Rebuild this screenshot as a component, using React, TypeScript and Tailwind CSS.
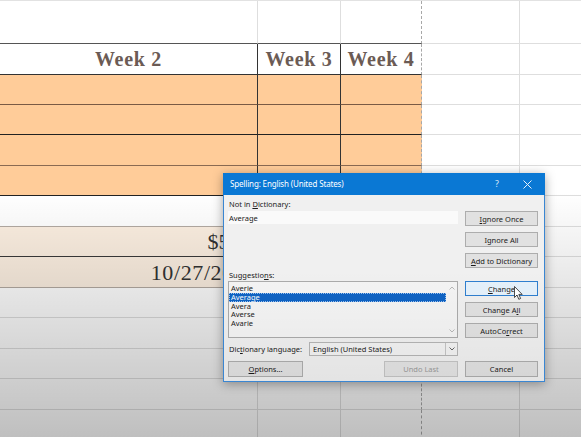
import React from "react";

const ui = { fontFamily: '"Noto Sans", "Open Sans", sans-serif' };
const serif = { fontFamily: '"Liberation Serif", "DejaVu Serif", serif' };

function U({ children }: { children: React.ReactNode }) {
  return <span className="underline underline-offset-[1px]">{children}</span>;
}

function Btn({
  children,
  variant = "normal",
  className = "",
}: {
  children: React.ReactNode;
  variant?: "normal" | "default" | "disabled";
  className?: string;
}) {
  const v =
    variant === "default"
      ? "bg-[#e5f1fb] border-[#2f7fcf] text-[#1a1a1a]"
      : variant === "disabled"
      ? "bg-[#e3e3e3] border-[#c4c4c4] text-[#9a9a9a]"
      : "bg-[#e1e1e1] border-[#adadad] text-[#1a1a1a]";
  return (
    <div
      className={`flex items-center justify-center border text-[7.5px] leading-[10px] ${v} ${className}`}
    >
      {children}
    </div>
  );
}

export default function App() {
  return (
    <div className="relative w-[581px] h-[437px] overflow-hidden bg-white">
      {/* Spreadsheet */}
      <div className="flex flex-col border-t border-t-[#e2e2e2]">
        {/* Row 0 */}
        <div className="flex h-[43px]">
          <div className="w-[258px] border-r border-b border-r-[#dedede] border-b-[#555555]" />
          <div className="w-[83px] border-r border-b border-r-[#dedede] border-b-[#555555]" />
          <div className="w-[81px] border-r border-b border-r-[#a8a8a8] [border-right-style:dashed] border-b-[#555555]" />
          <div className="w-[98px] border-r border-b border-r-[#dedede] border-b-[#dedede]" />
          <div className="flex-1 border-b border-b-[#dedede]" />
        </div>
        {/* Header row */}
        <div className="flex h-[31px] text-[20px] font-bold tracking-[0.7px] text-[#6b5b55]" style={serif}>
          <div className="w-[258px] flex items-center justify-center border-r border-b border-r-[#333333] border-b-[#333333]">
            Week 2
          </div>
          <div className="w-[83px] flex items-center justify-center border-r border-b border-r-[#333333] border-b-[#333333]">
            Week 3
          </div>
          <div className="w-[81px] flex items-center justify-center border-r border-b border-r-[#a8a8a8] [border-right-style:dashed] border-b-[#333333]">
            Week 4
          </div>
          <div className="w-[98px] border-r border-b border-r-[#dedede] border-b-[#dedede]" />
          <div className="flex-1 border-b border-b-[#dedede]" />
        </div>
        {/* Orange rows */}
        <div className="flex h-[30px]">
          <div className="w-[258px] bg-[#ffcc99] border-r border-b border-r-[#333333] border-b-[#7a5a44]" />
          <div className="w-[83px] bg-[#ffcc99] border-r border-b border-r-[#333333] border-b-[#7a5a44]" />
          <div className="w-[81px] bg-[#ffcc99] border-r border-b border-r-[#a8a8a8] [border-right-style:dashed] border-b-[#7a5a44]" />
          <div className="w-[98px] border-r border-b border-r-[#dedede] border-b-[#dedede]" />
          <div className="flex-1 border-b border-b-[#dedede]" />
        </div>
        <div className="flex h-[30px]">
          <div className="w-[258px] bg-[#ffcc99] border-r border-b border-r-[#333333] border-b-[#222222]" />
          <div className="w-[83px] bg-[#ffcc99] border-r border-b border-r-[#333333] border-b-[#222222]" />
          <div className="w-[81px] bg-[#ffcc99] border-r border-b border-r-[#a8a8a8] [border-right-style:dashed] border-b-[#222222]" />
          <div className="w-[98px] border-r border-b border-r-[#dedede] border-b-[#dedede]" />
          <div className="flex-1 border-b border-b-[#dedede]" />
        </div>
        <div className="flex h-[31px]">
          <div className="w-[258px] bg-[#ffcc99] border-r border-b border-r-[#333333] border-b-[#8a6a52]" />
          <div className="w-[83px] bg-[#ffcc99] border-r border-b border-r-[#333333] border-b-[#8a6a52]" />
          <div className="w-[81px] bg-[#ffcc99] border-r border-b border-r-[#a8a8a8] [border-right-style:dashed] border-b-[#8a6a52]" />
          <div className="w-[98px] border-r border-b border-r-[#dedede] border-b-[#dedede]" />
          <div className="flex-1 border-b border-b-[#dedede]" />
        </div>
        <div className="flex h-[30px]">
          <div className="w-[258px] bg-[#ffcc99] border-r border-b border-r-[#333333] border-b-[#222222]" />
          <div className="w-[83px] bg-[#ffcc99] border-r border-b border-r-[#333333] border-b-[#222222]" />
          <div className="w-[81px] bg-[#ffcc99] border-r border-b border-r-[#a8a8a8] [border-right-style:dashed] border-b-[#222222]" />
          <div className="w-[98px] border-r border-b border-r-[#dedede] border-b-[#dedede]" />
          <div className="flex-1 border-b border-b-[#dedede]" />
        </div>
        {/* White row */}
        <div className="flex h-[31px]">
          <div className="w-[258px] border-r border-b border-r-[#dedede] border-b-[#b3aaa2]" />
          <div className="w-[83px] border-r border-b border-r-[#dedede] border-b-[#b3aaa2]" />
          <div className="w-[81px] border-r border-b border-r-[#a8a8a8] [border-right-style:dashed] border-b-[#b3aaa2]" />
          <div className="w-[98px] border-r border-b border-r-[#dedede] border-b-[#dedede]" />
          <div className="flex-1 border-b border-b-[#dedede]" />
        </div>
        {/* Beige rows */}
        <div className="flex h-[30px] text-[22px] text-[#333333]" style={serif}>
          <div className="w-[258px] flex items-center justify-end pr-0 bg-[#fcefe1] border-r border-b border-r-[#dedede] border-b-[#3a3a3a]">
            $5.00
          </div>
          <div className="w-[83px] border-r border-b border-r-[#dedede] border-b-[#3a3a3a]" />
          <div className="w-[81px] border-r border-b border-r-[#a8a8a8] [border-right-style:dashed] border-b-[#3a3a3a]" />
          <div className="w-[98px] border-r border-b border-r-[#dedede] border-b-[#dedede]" />
          <div className="flex-1 border-b border-b-[#dedede]" />
        </div>
        <div className="flex h-[31px] text-[22px] tracking-[0.6px] text-[#333333]" style={serif}>
          <div className="w-[258px] flex items-center justify-end pr-0 bg-[#fcefe1] border-r border-b border-r-[#dedede] border-b-[#b3aaa2]">
            10/27/2020
          </div>
          <div className="w-[83px] border-r border-b border-r-[#dedede] border-b-[#b3aaa2]" />
          <div className="w-[81px] border-r border-b border-r-[#a8a8a8] [border-right-style:dashed] border-b-[#b3aaa2]" />
          <div className="w-[98px] border-r border-b border-r-[#dedede] border-b-[#dedede]" />
          <div className="flex-1 border-b border-b-[#dedede]" />
        </div>
        {/* Empty rows */}
        {[30, 31, 30, 31, 30].map((h, i) => (
          <div key={i} className="flex" style={{ height: h }}>
            <div className="w-[258px] border-r border-b border-r-[#dedede] border-b-[#dedede]" />
            <div className="w-[83px] border-r border-b border-r-[#dedede] border-b-[#dedede]" />
            <div className="w-[81px] border-r border-b border-r-[#a8a8a8] [border-right-style:dashed] border-b-[#dedede]" />
            <div className="w-[98px] border-r border-b border-r-[#dedede] border-b-[#dedede]" />
            <div className="flex-1 border-b border-b-[#dedede]" />
          </div>
        ))}
      </div>

      {/* Video shading over the sheet */}
      <div className="pointer-events-none absolute inset-0 bg-[linear-gradient(to_bottom,rgba(0,0,0,0)_192px,rgba(0,0,0,0.25)_437px)]" />

      {/* Spelling dialog */}
      <div
        className="absolute left-[223px] top-[173px] w-[322px] h-[209px] flex flex-col shadow-[0_2px_10px_rgba(0,0,0,0.35)]"
        style={ui}
      >
        <div className="h-[22px] bg-[#0a78d4] flex items-center pl-[7px] pr-[13px] text-white">
          <span className="flex-1 text-[8px] tracking-[-0.15px] leading-[10px]">Spelling: English (United States)</span>
          <span className="text-[9px] leading-[10px] mr-[24px] text-[#dbe9f7]">?</span>
          <svg width="9" height="9" viewBox="0 0 9 9" className="text-[#e8f1fb]">
            <path d="M0.5 0.5 L8.5 8.5 M8.5 0.5 L0.5 8.5" stroke="currentColor" strokeWidth="1" />
          </svg>
        </div>
        <div className="relative flex-1 flex flex-col bg-[#f0f0f0] border-x border-b border-[#3a86d2] pl-[4px] pr-[6px] pt-[4px] text-[7.5px] leading-[10px] text-[#1a1a1a]">
          {/* Section 1 */}
          <div className="flex gap-[7px]">
            <div className="w-[230px] flex flex-col">
              <div className="h-[10px] pl-[1px]">
                Not in <U>D</U>ictionary:
              </div>
              <div className="mt-[2px] h-[13px] bg-[#fafafa] pl-[1px] flex items-center">Average</div>
            </div>
            <div className="w-[73px] flex flex-col gap-[6px] pt-[12px]">
              <Btn className="h-[15px]">
                <U>I</U>gnore Once
              </Btn>
              <Btn className="h-[15px]">
                I<U>g</U>nore All
              </Btn>
              <Btn className="h-[15px]">
                <U>A</U>dd to Dictionary
              </Btn>
            </div>
          </div>
          {/* Suggestions */}
          <div className="mt-[2px] h-[10px] pl-[1px]">
            Suggestio<U>n</U>s:
          </div>
          <div className="mt-[1px] flex gap-[7px]">
            <div className="w-[230px] h-[57px] border border-[#ababab] bg-[#f4f4f4] flex">
              <div className="flex-1 flex flex-col pt-[2px] text-[7.5px] leading-[8.75px]">
                <div className="pl-[2px]">Averie</div>
                <div className="pl-[2px] bg-[#0f63c4] text-white outline outline-1 outline-dotted outline-[#9fc3ee] -outline-offset-1">
                  Average
                </div>
                <div className="pl-[2px]">Avera</div>
                <div className="pl-[2px]">Averse</div>
                <div className="pl-[2px]">Avarie</div>
              </div>
              <div className="w-[11px] flex flex-col items-center justify-between py-[4px]">
                <svg width="6" height="4" viewBox="0 0 6 4">
                  <path d="M0.5 3.5 L3 1 L5.5 3.5" fill="none" stroke="#b0b0b0" strokeWidth="0.9" />
                </svg>
                <svg width="6" height="4" viewBox="0 0 6 4">
                  <path d="M0.5 0.5 L3 3 L5.5 0.5" fill="none" stroke="#b0b0b0" strokeWidth="0.9" />
                </svg>
              </div>
            </div>
            <div className="w-[73px] flex flex-col gap-[6px]">
              <Btn className="h-[15px]" variant="default">
                <U>C</U>hange
              </Btn>
              <Btn className="h-[15px]">
                Change A<U>l</U>l
              </Btn>
              <Btn className="h-[15px]">
                AutoCo<U>r</U>rect
              </Btn>
            </div>
          </div>
          {/* Dictionary language */}
          <div className="mt-[4px] flex items-center h-[14px]">
            <div className="w-[81px] pl-[1px]">
              Dic<U>t</U>ionary language:
            </div>
            <div className="w-[149px] h-[14px] border border-[#b5b5b5] bg-[#f2f2f2] flex items-center">
              <span className="flex-1 pl-[3px]">English (United States)</span>
              <div className="w-[12px] h-full border-l border-[#c4c4c4] flex items-center justify-center">
                <svg width="6" height="4" viewBox="0 0 6 4">
                  <path d="M0.5 0.5 L3 3 L5.5 0.5" fill="none" stroke="#555555" strokeWidth="0.9" />
                </svg>
              </div>
            </div>
          </div>
          {/* Bottom buttons */}
          <div className="mt-[5px] flex">
            <Btn className="h-[16px] w-[75px]">
              <U>O</U>ptions...
            </Btn>
            <div className="w-[81px]" />
            <Btn className="h-[16px] w-[74px]" variant="disabled">
              Undo Last
            </Btn>
            <div className="w-[7px]" />
            <Btn className="h-[16px] w-[73px]">Cancel</Btn>
          </div>
          <div className="pointer-events-none absolute inset-0 bg-[linear-gradient(to_bottom,rgba(0,0,0,0)_40%,rgba(0,0,0,0.05)_100%)]" />
        </div>
      </div>

      {/* Mouse cursor */}
      <svg
        className="absolute left-[514px] top-[286px]"
        width="10"
        height="15"
        viewBox="0 0 10 15"
      >
        <path
          d="M0.5 0.5 L0.5 11.5 L3 9 L4.8 13.3 L6.6 12.5 L4.8 8.4 L8.2 8.4 Z"
          fill="#ffffff"
          stroke="#222222"
          strokeWidth="0.8"
          strokeLinejoin="round"
        />
      </svg>
    </div>
  );
}
